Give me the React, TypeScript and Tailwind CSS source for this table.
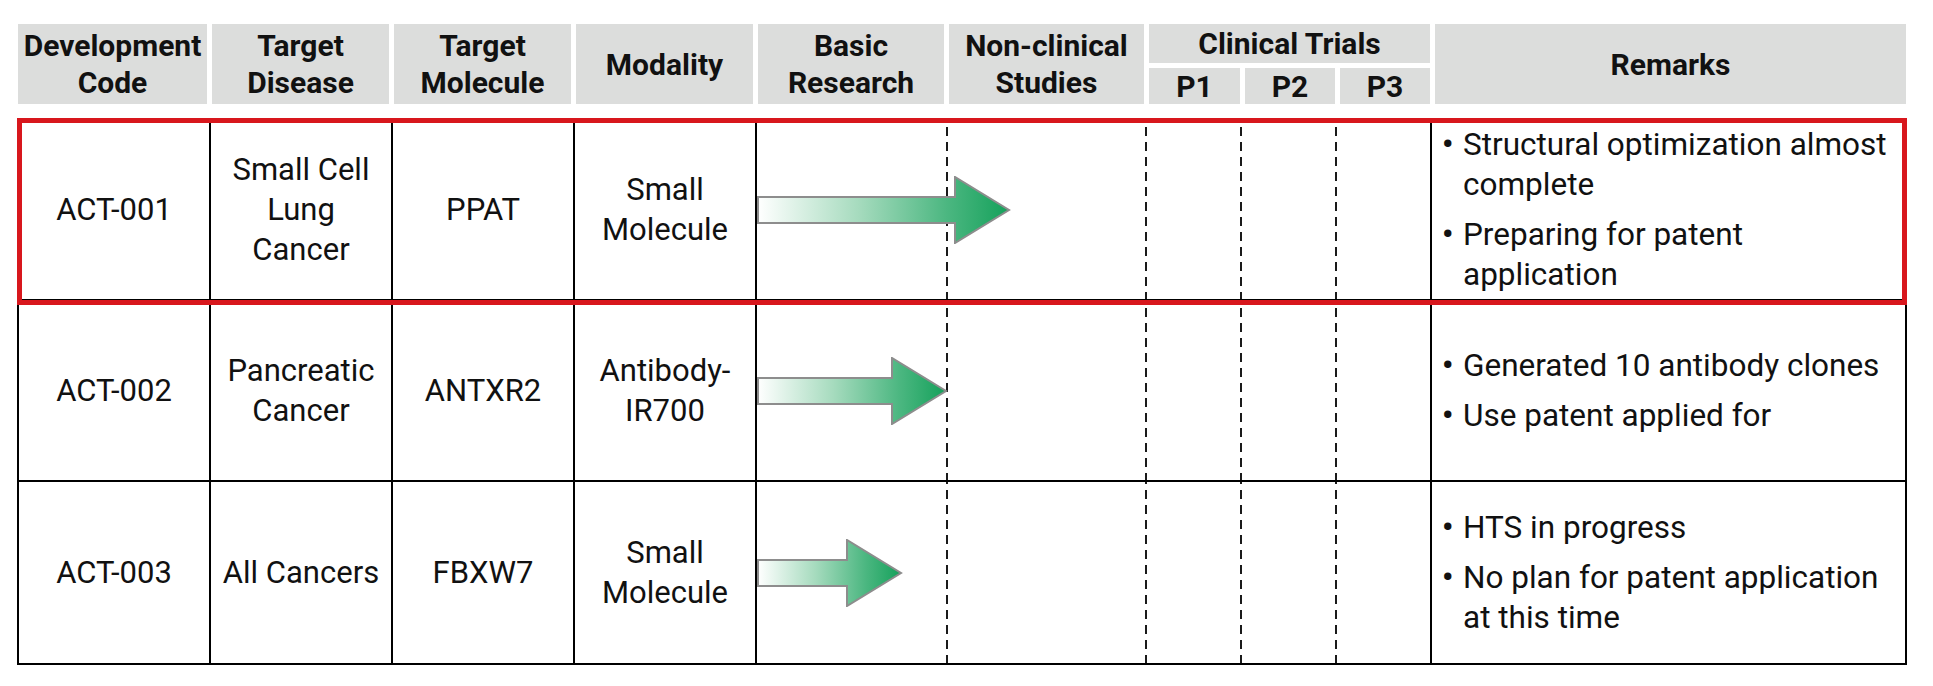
import React from "react";

type Row = {
  code: string;
  disease: string[];
  molecule: string;
  modality: string[];
  arrow: number;
  remarks: string[][];
  highlight?: boolean;
};

const rows: Row[] = [
  {
    code: "ACT-001",
    disease: ["Small Cell", "Lung", "Cancer"],
    molecule: "PPAT",
    modality: ["Small", "Molecule"],
    arrow: 254,
    remarks: [
      ["Structural optimization almost", "complete"],
      ["Preparing for patent", "application"],
    ],
    highlight: true,
  },
  {
    code: "ACT-002",
    disease: ["Pancreatic", "Cancer"],
    molecule: "ANTXR2",
    modality: ["Antibody-", "IR700"],
    arrow: 191,
    remarks: [["Generated 10 antibody clones"], ["Use patent applied for"]],
  },
  {
    code: "ACT-003",
    disease: ["All Cancers"],
    molecule: "FBXW7",
    modality: ["Small", "Molecule"],
    arrow: 146,
    remarks: [["HTS in progress"], ["No plan for patent application", "at this time"]],
  },
];

const Arrow = ({ width, id }: { width: number; id: string }) => {
  const h = 68;
  const base = width - 56;
  return (
    <svg width={width} height={h} viewBox={`0 0 ${width} ${h}`} className="block">
      <defs>
        <linearGradient id={id} x1="0" y1="0" x2="1" y2="0">
          <stop offset="0" stopColor="#ffffff" />
          <stop offset="0.4" stopColor="#a6dbbe" />
          <stop offset="0.75" stopColor="#4cb781" />
          <stop offset="1" stopColor="#15a15b" />
        </linearGradient>
      </defs>
      <path
        d={`M1 21 H${base} V1 L${width - 2} 34 L${base} 67 V47 H1 Z`}
        fill={`url(#${id})`}
        stroke="#8d8d8d"
        strokeWidth="2"
        strokeLinejoin="miter"
      />
    </svg>
  );
};

const Lines = ({ lines }: { lines: string[] }) => (
  <div className="flex items-center justify-center text-center">
    <div>
      {lines.map((l) => (
        <div key={l} className="whitespace-nowrap">
          {l}
        </div>
      ))}
    </div>
  </div>
);

const dashed =
  "bg-[linear-gradient(to_bottom,#1a1a1a_60%,transparent_60%)] bg-[length:2px_15px] bg-repeat-y bg-right";

const headCell = "flex items-center justify-center text-center bg-[#dcdddc]";

export default function App() {
  return (
    <div className="min-h-screen bg-white pt-[24px] font-[Roboto,sans-serif] text-[#111]">
      {/* header */}
      <div className="ml-[18px] w-[1888px] grid grid-cols-[189px_177px_177px_177px_186px_195px_91px_90px_90px_1fr] grid-rows-[39px_36px] gap-x-[5px] gap-y-[5px] text-[30px] leading-[37px] font-bold">
        <div className={`${headCell} row-span-2`}>
          <div>
            Development
            <br />
            Code
          </div>
        </div>
        <div className={`${headCell} row-span-2`}>
          <div>
            Target
            <br />
            Disease
          </div>
        </div>
        <div className={`${headCell} row-span-2`}>
          <div>
            Target
            <br />
            Molecule
          </div>
        </div>
        <div className={`${headCell} row-span-2`}>Modality</div>
        <div className={`${headCell} row-span-2`}>
          <div>
            Basic
            <br />
            Research
          </div>
        </div>
        <div className={`${headCell} row-span-2`}>
          <div>
            Non-clinical
            <br />
            Studies
          </div>
        </div>
        <div className={`${headCell} col-span-3`}>Clinical Trials</div>
        <div className={`${headCell} row-span-2`}>Remarks</div>
        <div className={headCell}>P1</div>
        <div className={headCell}>P2</div>
        <div className={headCell}>P3</div>
      </div>

      {/* body */}
      <div className="relative ml-[17px] mt-[14px] w-[1890px] border-2 border-black text-[31px] leading-[40px]">
        {rows.map((r, i) => (
          <div
            key={r.code}
            className={`grid h-[181px] grid-cols-[192px_182px_182px_182px_191px_199px_95px_95px_95px_1fr] ${
              i < rows.length - 1 ? "border-b-2 border-black" : ""
            }`}
          >
            <div className="flex items-center justify-center border-r-2 border-black">{r.code}</div>
            <div className="flex items-center justify-center border-r-2 border-black">
              <Lines lines={r.disease} />
            </div>
            <div className="flex items-center justify-center border-r-2 border-black">{r.molecule}</div>
            <div className="flex items-center justify-center border-r-2 border-black">
              <Lines lines={r.modality} />
            </div>
            <div className={`relative ${dashed}`}>
              <div className="absolute left-0 top-1/2 z-10 -translate-y-1/2">
                <Arrow width={r.arrow} id={`g${i}`} />
              </div>
            </div>
            <div className={dashed} />
            <div className={dashed} />
            <div className={dashed} />
            <div className="border-r-2 border-black" />
            <div className="flex flex-col justify-center gap-[10px] pl-[10px] text-[31.5px] leading-[40px]">
              {r.remarks.map((item) => (
                <div key={item[0]} className="flex">
                  <span className="w-[21px] shrink-0 font-bold">•</span>
                  <div>
                    {item.map((l) => (
                      <div key={l} className="whitespace-nowrap">
                        {l}
                      </div>
                    ))}
                  </div>
                </div>
              ))}
            </div>
          </div>
        ))}
        {/* highlight box over first row */}
        <div className="pointer-events-none absolute -left-[2px] -right-[2px] -top-[2px] z-20 h-[187px] border-[5px] border-[#d8171d]" />
      </div>
    </div>
  );
}
